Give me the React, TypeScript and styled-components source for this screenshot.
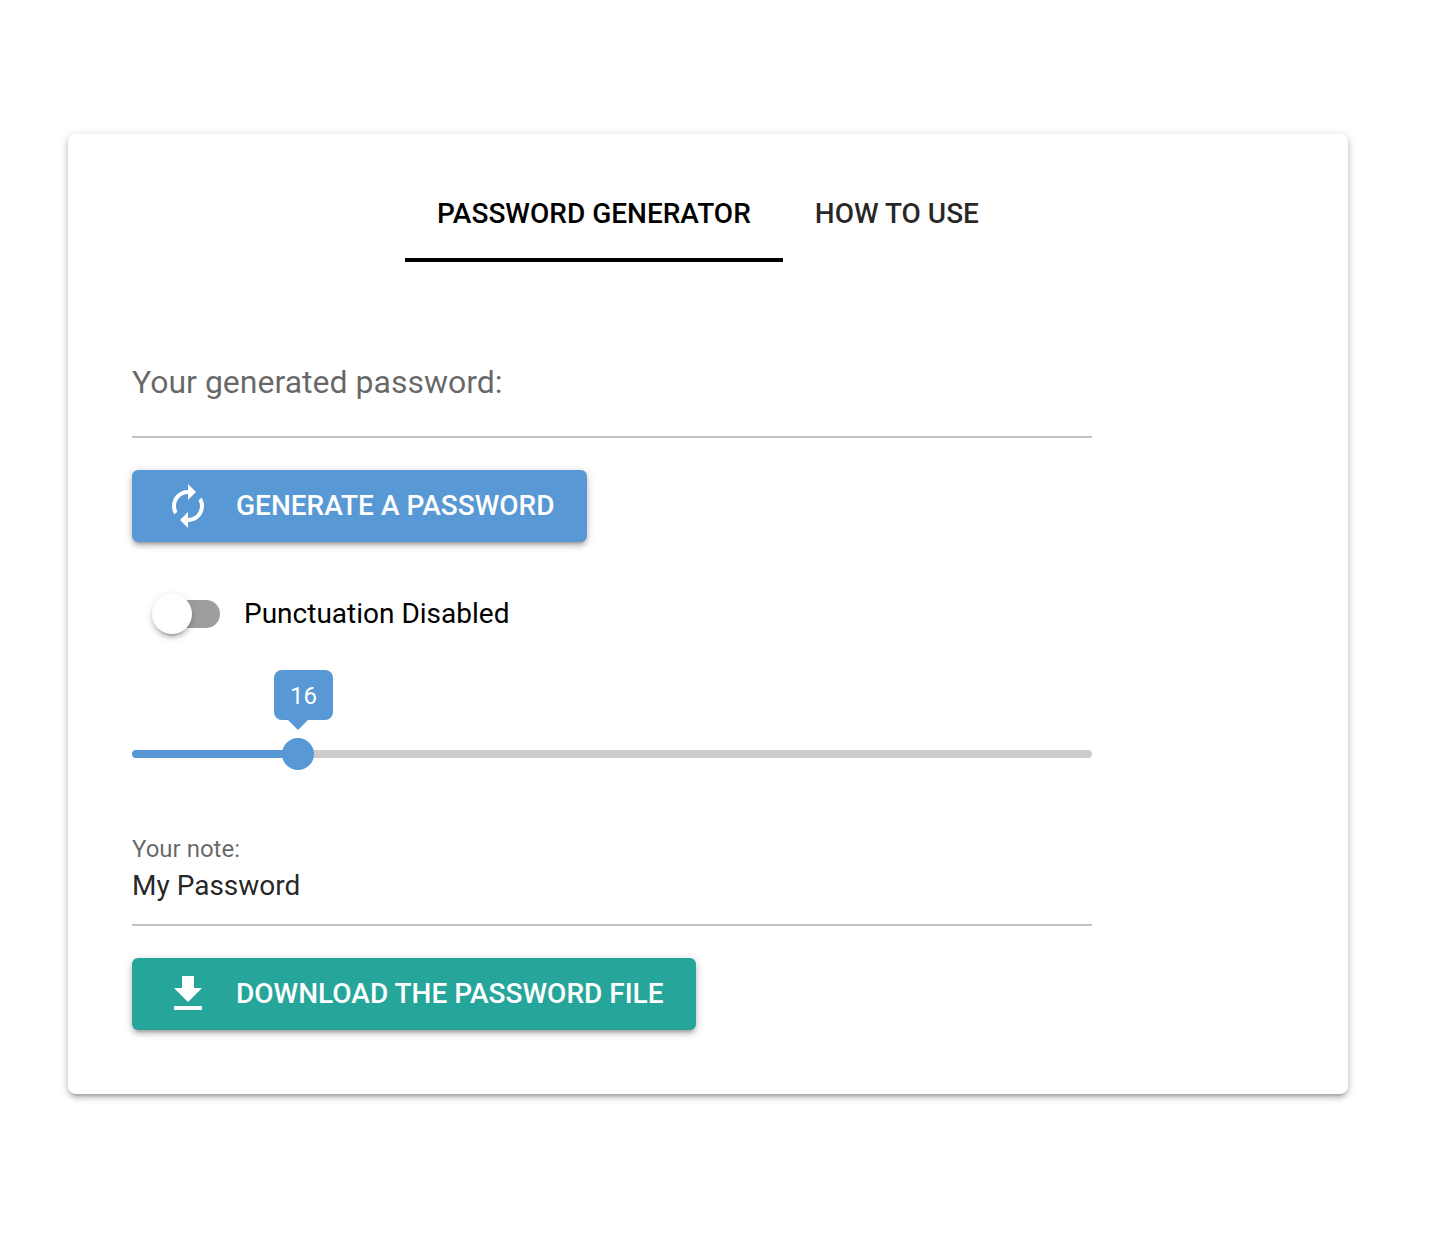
import React, { useState } from "react";
import styled, { createGlobalStyle, css } from "styled-components";

const BLUE = "#5898d4";
const TEAL = "#26a69a";
const SHADOW =
  "0 2px 10px rgba(0, 0, 0, 0.2), 0 4px 4px rgba(0, 0, 0, 0.14), 0 6px 2px -4px rgba(0, 0, 0, 0.12)";

const GlobalStyle = createGlobalStyle`
  *, *::before, *::after {
    box-sizing: border-box;
  }

  body {
    margin: 0;
    background: #fff;
    color: #000;
    font-family: Roboto, "Liberation Sans", sans-serif;
    font-size: 28px;
    line-height: 40px;
    -webkit-font-smoothing: antialiased;
  }

  button, input {
    font: inherit;
  }
`;

const Page = styled.main`
  padding: 134px 98px 156px 68px;
`;

const Card = styled.section`
  padding: 32px 64px 64px;
  border-radius: 8px;
  background: #fff;
  box-shadow: ${SHADOW};
`;

const Tabs = styled.nav`
  display: flex;
  justify-content: center;
`;

const Tab = styled.button<{ $active: boolean }>`
  height: 96px;
  padding: 0 32px;
  border: 0;
  background: none;
  box-shadow: ${(p) => (p.$active ? "inset 0 -4px 0 #000" : "none")};
  color: ${(p) => (p.$active ? "#000" : "rgba(0, 0, 0, 0.85)")};
  font-weight: 500;
  text-transform: uppercase;
  cursor: pointer;
`;

const Form = styled.form`
  display: flex;
  flex-direction: column;
  align-items: flex-start;
  width: calc(100% * 10 / 12);
  padding-top: 64px;
`;

const Field = styled.div`
  display: grid;
  width: 100%;
  height: 112px;
  margin-bottom: 32px;
  border-bottom: 2px solid rgba(0, 0, 0, 0.24);
`;

const FieldLabel = styled.label<{ $floating: boolean }>`
  grid-area: 1 / 1;
  color: rgba(0, 0, 0, 0.6);
  ${(p) =>
    p.$floating
      ? css`
          padding-top: 19px;
          font-size: 24px;
          line-height: 32px;
        `
      : css`
          padding-top: 36px;
          font-size: 32px;
          line-height: 40px;
        `}
`;

const FieldInput = styled.input`
  grid-area: 1 / 1;
  width: 100%;
  padding: 38px 0 4px;
  border: 0;
  outline: 0;
  background: transparent;
  color: rgba(0, 0, 0, 0.87);
`;

const ActionButton = styled.button<{ $color: string }>`
  display: flex;
  align-items: center;
  gap: 24px;
  height: 72px;
  padding: 0 32px;
  border: 0;
  border-radius: 6px;
  background: ${(p) => p.$color};
  box-shadow: ${SHADOW};
  color: #fff;
  font-weight: 500;
  text-transform: uppercase;
  cursor: pointer;

  svg {
    width: 48px;
    height: 48px;
    fill: currentColor;
  }
`;

const ToggleLabel = styled.label`
  display: flex;
  align-items: center;
  height: 80px;
  margin-top: 32px;
  cursor: pointer;
`;

const ToggleInput = styled.input`
  appearance: none;
  position: relative;
  display: flex;
  align-items: center;
  width: 68px;
  height: 40px;
  margin: 0 24px 0 20px;
  border-radius: 20px;
  cursor: pointer;

  &::before {
    content: "";
    width: 64px;
    height: 28px;
    margin-left: 4px;
    border-radius: 14px;
    background: #9e9e9e;
  }

  &::after {
    content: "";
    position: absolute;
    left: 0;
    width: 40px;
    height: 40px;
    border-radius: 50%;
    background: #fff;
    box-shadow: 0 6px 2px -4px rgba(0, 0, 0, 0.2), 0 4px 4px rgba(0, 0, 0, 0.14),
      0 2px 10px rgba(0, 0, 0, 0.12);
  }

  &:checked::before {
    background: #acccea;
  }

  &:checked::after {
    left: 28px;
    background: ${BLUE};
  }
`;

const Slider = styled.div`
  position: relative;
  display: grid;
  align-items: center;
  width: 100%;
  height: 80px;
  margin: 60px 0 20px;
`;

const Track = styled.div`
  grid-area: 1 / 1;
  height: 8px;
  overflow: hidden;
  border-radius: 4px;
  background: #ccc;
`;

const TrackFill = styled.div`
  height: 100%;
  background: ${BLUE};
`;

const Range = styled.input`
  appearance: none;
  grid-area: 1 / 1;
  z-index: 1;
  width: calc(100% + 32px);
  height: 32px;
  margin: 0 -16px;
  background: transparent;
  cursor: pointer;

  &::-webkit-slider-thumb {
    appearance: none;
    width: 32px;
    height: 32px;
    border-radius: 50%;
    background: ${BLUE};
  }
`;

const Pin = styled.div`
  position: absolute;
  bottom: 64px;
  width: 0;
  display: flex;
  flex-direction: column;
  align-items: center;

  &::after {
    content: "";
    border: 10px solid transparent;
    border-top-color: ${BLUE};
    border-bottom: 0;
  }
`;

const PinText = styled.output`
  padding: 6px 16px 4px;
  border-radius: 8px;
  background: ${BLUE};
  color: #fff;
  font-size: 24px;
`;

const MIN = 6;
const MAX = 64;
const SYMBOLS = "!#$%&()*+,-./:;<=>?@[]^_{|}~";
const LETTERS = "ABCDEFGHIJKLMNOPQRSTUVWXYZabcdefghijklmnopqrstuvwxyz0123456789";

export default function App() {
  const [tab, setTab] = useState("generator");
  const [password, setPassword] = useState("");
  const [note, setNote] = useState("My Password");
  const [punctuation, setPunctuation] = useState(false);
  const [length, setLength] = useState(16);

  const ratio = (length - MIN) / (MAX - MIN);
  // The bubble leans towards the middle of the track near either end.
  const shift = Math.round((0.5 - ratio) * 18);

  const generate = () => {
    const chars = punctuation ? LETTERS + SYMBOLS : LETTERS;
    const values = crypto.getRandomValues(new Uint32Array(length));
    setPassword(Array.from(values, (v) => chars[v % chars.length]).join(""));
  };

  const download = () => {
    const url = URL.createObjectURL(new Blob([`${note}\n${password}\n`], { type: "text/plain" }));
    const link = document.createElement("a");
    link.href = url;
    link.download = `${note}.txt`;
    link.click();
    URL.revokeObjectURL(url);
  };

  return (
    <>
      <GlobalStyle />
      <Page>
        <Card>
          <Tabs>
            <Tab type="button" $active={tab === "generator"} onClick={() => setTab("generator")}>
              Password generator
            </Tab>
            <Tab type="button" $active={tab === "usage"} onClick={() => setTab("usage")}>
              How to use
            </Tab>
          </Tabs>

          <Form onSubmit={(e) => e.preventDefault()}>
            <Field>
              <FieldLabel htmlFor="password" $floating={password !== ""}>
                Your generated password:
              </FieldLabel>
              <FieldInput id="password" value={password} readOnly />
            </Field>

            <ActionButton type="button" $color={BLUE} onClick={generate}>
              <svg viewBox="0 0 24 24" aria-hidden="true">
                <path d="M12 6v3l4-4-4-4v3c-4.42 0-8 3.58-8 8 0 1.57.46 3.03 1.24 4.26L6.7 14.8c-.45-.83-.7-1.79-.7-2.8 0-3.31 2.69-6 6-6zm6.76 1.74L17.3 9.2c.44.84.7 1.79.7 2.8 0 3.31-2.69 6-6 6v-3l-4 4 4 4v-3c4.42 0 8-3.58 8-8 0-1.57-.46-3.03-1.24-4.26z" />
              </svg>
              Generate a password
            </ActionButton>

            <ToggleLabel>
              <ToggleInput
                type="checkbox"
                role="switch"
                checked={punctuation}
                onChange={(e) => setPunctuation(e.target.checked)}
              />
              {punctuation ? "Punctuation Enabled" : "Punctuation Disabled"}
            </ToggleLabel>

            <Slider>
              <Track>
                <TrackFill style={{ width: `${ratio * 100}%` }} />
              </Track>
              <Range
                id="length"
                type="range"
                aria-label="Password length"
                min={MIN}
                max={MAX}
                value={length}
                onChange={(e) => setLength(Number(e.target.value))}
              />
              <Pin style={{ left: `${ratio * 100}%` }}>
                <PinText htmlFor="length" style={{ transform: `translateX(${shift}px)` }}>
                  {length}
                </PinText>
              </Pin>
            </Slider>

            <Field>
              <FieldLabel htmlFor="note" $floating={note !== ""}>
                Your note:
              </FieldLabel>
              <FieldInput id="note" value={note} onChange={(e) => setNote(e.target.value)} />
            </Field>

            <ActionButton type="button" $color={TEAL} onClick={download}>
              <svg viewBox="0 0 24 24" aria-hidden="true">
                <path d="M19 9h-4V3H9v6H5l7 7 7-7zM5 18v2h14v-2H5z" />
              </svg>
              Download the password file
            </ActionButton>
          </Form>
        </Card>
      </Page>
    </>
  );
}
